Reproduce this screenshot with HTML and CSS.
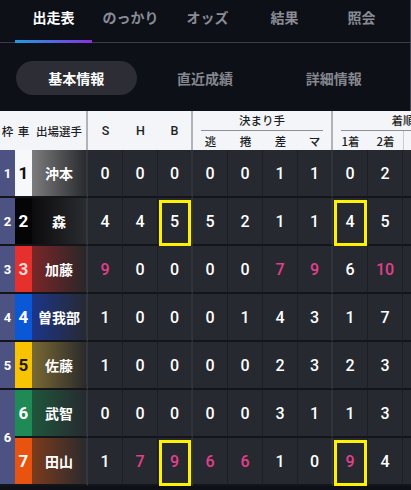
FILE: index.html
```html
<!DOCTYPE html>
<html lang="ja">
<head>
    <meta charset="UTF-8">
    <meta name="viewport" content="width=device-width, initial-scale=1.0">
    <title>出走表</title>
    <link rel="stylesheet" href="styles.css">
</head>
<body>
    <div class="top">
        <nav class="tabs">
            <div class="tab active">出走表</div>
            <div class="tab">のっかり</div>
            <div class="tab">オッズ</div>
            <div class="tab">結果</div>
            <div class="tab">照会</div>
        </nav>
        <div class="segments">
            <div class="seg active">基本情報</div>
            <div class="seg">直近成績</div>
            <div class="seg">詳細情報</div>
        </div>
    </div>

    <div class="table-wrap">
        <table class="entries">
            <colgroup>
                <col class="c-waku">
                <col class="c-car">
                <col class="c-name">
                <col class="c-num" span="11">
            </colgroup>
            <thead>
                <tr class="head-top">
                    <th rowspan="2">枠</th>
                    <th rowspan="2">車</th>
                    <th rowspan="2" class="sep">出場選手</th>
                    <th rowspan="2" class="num-h">S</th>
                    <th rowspan="2" class="num-h">H</th>
                    <th rowspan="2" class="num-h sep">B</th>
                    <th colspan="4" class="group sep"><div>決まり手</div></th>
                    <th colspan="4" class="group"><div>着順</div></th>
                </tr>
                <tr class="head-sub">
                    <th>逃</th>
                    <th>捲</th>
                    <th>差</th>
                    <th class="sep">マ</th>
                    <th>1着</th>
                    <th>2着</th>
                    <th class="edge"></th>
                    <th></th>
                </tr>
            </thead>
            <tbody>
                <tr>
                    <td class="waku">1</td>
                    <td class="car car-1">1</td>
                    <td class="name name-1">沖本</td>
                    <td>0</td><td>0</td><td class="sep">0</td>
                    <td>0</td><td>0</td><td>1</td><td class="sep">1</td>
                    <td>0</td><td>2</td><td></td><td></td>
                </tr>
                <tr>
                    <td class="waku">2</td>
                    <td class="car car-2">2</td>
                    <td class="name name-2">森</td>
                    <td>4</td><td>4</td><td class="sep hl">5</td>
                    <td>5</td><td>2</td><td>1</td><td class="sep">1</td>
                    <td class="hl">4</td><td>5</td><td></td><td></td>
                </tr>
                <tr>
                    <td class="waku">3</td>
                    <td class="car car-3">3</td>
                    <td class="name name-3">加藤</td>
                    <td class="pink">9</td><td>0</td><td class="sep">0</td>
                    <td>0</td><td>0</td><td class="pink">7</td><td class="sep pink">9</td>
                    <td>6</td><td class="pink">10</td><td></td><td></td>
                </tr>
                <tr>
                    <td class="waku">4</td>
                    <td class="car car-4">4</td>
                    <td class="name name-4">曽我部</td>
                    <td>1</td><td>0</td><td class="sep">0</td>
                    <td>0</td><td>1</td><td>4</td><td class="sep">3</td>
                    <td>1</td><td>7</td><td></td><td></td>
                </tr>
                <tr>
                    <td class="waku">5</td>
                    <td class="car car-5">5</td>
                    <td class="name name-5">佐藤</td>
                    <td>1</td><td>0</td><td class="sep">0</td>
                    <td>0</td><td>0</td><td>2</td><td class="sep">3</td>
                    <td>2</td><td>3</td><td></td><td></td>
                </tr>
                <tr>
                    <td class="waku" rowspan="2">6</td>
                    <td class="car car-6">6</td>
                    <td class="name name-6">武智</td>
                    <td>0</td><td>0</td><td class="sep">0</td>
                    <td>0</td><td>0</td><td>3</td><td class="sep">1</td>
                    <td>1</td><td>3</td><td></td><td></td>
                </tr>
                <tr>
                    <td class="car car-7">7</td>
                    <td class="name name-7">田山</td>
                    <td>1</td><td class="pink">7</td><td class="sep pink hl">9</td>
                    <td class="pink">6</td><td class="pink">6</td><td>1</td><td class="sep">0</td>
                    <td class="pink hl">9</td><td>4</td><td></td><td></td>
                </tr>
            </tbody>
        </table>
    </div>
</body>
</html>
```

FILE: styles.css
```css
body {
    margin: 0;
    background-color: #0e1018;
    font-family: "Noto Sans CJK JP", "Noto Sans", sans-serif;
    color: #fff;
}
.top {
    border-right: 1px solid #464953;
}
.tabs {
    display: flex;
    height: 42px;
    padding-left: 15px;
    border-bottom: 1px solid #3a3d47;
}
.tab {
    position: relative;
    width: 77px;
    padding-top: 7px;
    line-height: 20px;
    text-align: center;
    font-size: 14px;
    font-weight: 700;
    color: #8a8c95;
}
.tab.active {
    color: #fff;
}
.tab.active::after {
    content: "";
    position: absolute;
    left: 0;
    right: 0;
    bottom: -1px;
    height: 3px;
    background: linear-gradient(to right, #1b9ee2, #8b2fe0);
}
.segments {
    display: flex;
    padding: 18px 12px 16px;
}
.seg {
    flex: 1;
    margin: 0 4px;
    height: 34px;
    line-height: 34px;
    border-radius: 17px;
    text-align: center;
    font-size: 14px;
    font-weight: 700;
    color: #85878f;
}
.seg.active {
    background-color: #2c2d35;
    color: #fff;
}
.table-wrap {
    overflow: hidden;
}
.entries {
    table-layout: fixed;
    width: 473px;
    border-collapse: separate;
    border-spacing: 0;
}
.c-waku { width: 15px; }
.c-car { width: 17px; }
.c-name { width: 56px; }
.c-num { width: 35px; }

.entries th {
    background-color: #f3f5f9;
    color: #1e1f24;
    font-size: 11.5px;
    font-weight: 500;
    padding: 0;
    text-align: center;
    white-space: nowrap;
}
.entries th.num-h {
    font-family: Roboto, "Noto Sans", sans-serif;
    font-size: 12.5px;
}
.head-top th {
    height: 20px;
}
.head-sub th {
    height: 19px;
}
.entries th.sep {
    border-right: 2px solid #b1b3b8;
}
.entries th.edge {
    border-left: 1px solid #c9cbd0;
}
.entries th.group {
    padding: 0 8px;
    vertical-align: bottom;
}
.entries th.group div {
    line-height: 19px;
    border-bottom: 1px solid #8d8f95;
}
.entries td {
    height: 46px;
    padding: 0;
    text-align: center;
    background-color: #262930;
    border-bottom: 2px solid #13151a;
    border-right: 1px solid #1c1e24;
    font-family: Roboto, "Noto Sans", sans-serif;
    font-size: 16px;
    font-weight: 500;
    color: #fff;
}
.entries td.sep {
    border-right: 2px solid #30333a;
}
.entries td.pink {
    color: #e2408a;
}
.entries td.hl {
    position: relative;
}
.entries td.hl::after {
    content: "";
    position: absolute;
    top: 2px;
    bottom: -2px;
    left: 1px;
    right: 0;
    border: 3px solid #fff200;
}
.entries td.waku {
    background-color: #4c5281;
    border-right: none;
    font-size: 13px;
    font-weight: 700;
}
.entries td.car {
    border-right: none;
    font-size: 17px;
    font-weight: 700;
}
.car-1 { background-color: #f7f8fa !important; color: #111 !important; }
.car-2 { background-color: #050505 !important; }
.car-3 { background-color: #e5302e !important; color: #ffd9d6 !important; }
.car-4 { background-color: #0b58d6 !important; }
.car-5 { background-color: #f8c300 !important; color: #1a1a1a !important; }
.car-6 { background-color: #1f8a55 !important; }
.car-7 { background-color: #e8540f !important; }

.entries td.name {
    font-family: "Noto Sans CJK JP", sans-serif;
    font-size: 14px;
    font-weight: 700;
    border-right: 2px solid #34373e;
}
.name-1 { background: linear-gradient(to right, #7c7c7e, #2a2b2e) !important; }
.name-2 { background: linear-gradient(to right, #0c0c0d, #2a2b2f) !important; }
.name-3 { background: linear-gradient(to right, #7a2627, #2a2629) !important; }
.name-4 { background: linear-gradient(to right, #1c3588, #272a33) !important; }
.name-5 { background: linear-gradient(to right, #7a6932, #2a2a2c) !important; }
.name-6 { background: linear-gradient(to right, #1f553b, #272a30) !important; }
.name-7 { background: linear-gradient(to right, #7b3b1c, #2b2a2d) !important; }
```
